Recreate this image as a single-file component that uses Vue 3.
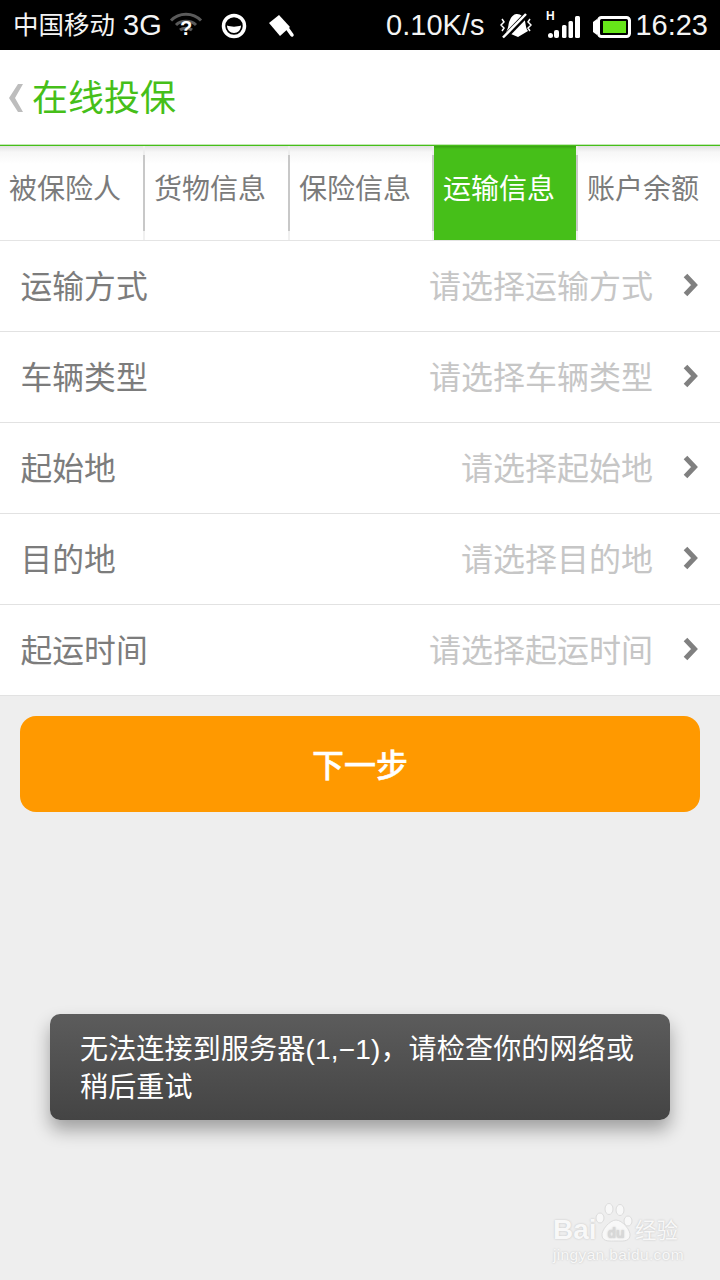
<script setup>
const tabs = [
  { label: '被保险人' },
  { label: '货物信息' },
  { label: '保险信息' },
  { label: '运输信息', active: true },
  { label: '账户余额' },
]
const rows = [
  { label: '运输方式', hint: '请选择运输方式' },
  { label: '车辆类型', hint: '请选择车辆类型' },
  { label: '起始地', hint: '请选择起始地' },
  { label: '目的地', hint: '请选择目的地' },
  { label: '起运时间', hint: '请选择起运时间' },
]
</script>

<template>
  <div class="page">
    <div class="status">
      <div class="status-left">
        <span class="carrier">中国移动</span>
        <span class="net">3G</span>
        <svg class="wifi" width="34" height="50" viewBox="0 0 34 50">
          <path d="M2 20.500C10 12 24 12 32 20.500" fill="none" stroke="#5a5a5a" stroke-width="3"/>
          <path d="M7 25C12 20 22 20 27 25" fill="none" stroke="#5a5a5a" stroke-width="3"/>
          <path d="M11 30C14 27.500 20 27.500 23 30" fill="none" stroke="#5a5a5a" stroke-width="3"/>
          <text x="17" y="35" text-anchor="middle" class="wifi-q">?</text>
        </svg>
        <svg class="moon" width="26" height="50" viewBox="0 0 26 50">
          <circle cx="13" cy="26" r="10.500" fill="none" stroke="#fff" stroke-width="3.500"/>
          <path d="M6 25.500C10 27 16 27 20 25.500C20 30 17 33 13 33S6 30 6 25.500Z" fill="#fff"/>
        </svg>
        <svg class="brush" width="28" height="50" viewBox="0 0 28 50">
          <path d="M2 23L12 15L23 27L13 36Z" fill="#fff"/>
          <path d="M20 28L25 35" stroke="#fff" stroke-width="3.500" stroke-linecap="round"/>
        </svg>
      </div>
      <div class="status-right">
        <span class="speed">0.10K/s</span>
        <svg class="mute" width="32" height="50" viewBox="0 0 32 50">
          <path d="M6 32C9 28 8 23 10 20C12 15 15 14 17 14C21 14 24 17 25 21C26 26 26 29 28 31L18 37Z" fill="#fff"/>
          <path d="M4 38L27 14" stroke="#000" stroke-width="5.500"/>
          <path d="M3 37.500L26 14" stroke="#fff" stroke-width="2.500"/>
          <path d="M2 19L4 22L1 25L4 28L2 31M30 19L28 22L31 25L28 28L30 31" fill="none" stroke="#fff" stroke-width="1.500"/>
        </svg>
        <svg class="signal" width="35" height="50" viewBox="0 0 35 50">
          <text x="0" y="20" class="signal-h">H</text>
          <circle cx="4.500" cy="35.500" r="2.500" fill="#fff"/>
          <rect x="8" y="30" width="5" height="8" rx="2" fill="#fff"/>
          <rect x="16" y="25" width="4.500" height="13" rx="1.500" fill="#fff"/>
          <rect x="22.500" y="21" width="4.500" height="17" rx="1.500" fill="#fff"/>
          <rect x="29" y="16" width="5" height="22" rx="1.500" fill="#fff"/>
        </svg>
        <svg class="battery" width="38" height="50" viewBox="0 0 38 50">
          <path d="M0 22L4 19V35L0 32Z" fill="#fff"/>
          <rect x="5.500" y="17.500" width="31" height="19" rx="3" fill="none" stroke="#fff" stroke-width="3"/>
          <rect x="10" y="21" width="23" height="12" fill="#66e619"/>
        </svg>
        <span class="clock">16:23</span>
      </div>
    </div>

    <header class="title-bar">
      <svg class="back" width="16" height="30" viewBox="0 0 16 30">
        <path d="M15 1H10L1 15L10 29H15L7 15Z" fill="#bdbdbd"/>
      </svg>
      <h1 class="title">在线投保</h1>
    </header>

    <nav class="tabs">
      <div v-for="tab in tabs" :key="tab.label" class="tab" :class="{ active: tab.active }">{{ tab.label }}</div>
    </nav>

    <section class="list">
      <div v-for="row in rows" :key="row.label" class="row">
        <span class="row-label">{{ row.label }}</span>
        <span class="row-hint">{{ row.hint }}</span>
        <svg class="chevron" width="17" height="24" viewBox="0 0 17 24">
          <path d="M3.500 2.500L12.500 12L3.500 21.500" fill="none" stroke="#808080" stroke-width="5"/>
        </svg>
      </div>
    </section>

    <div class="action">
      <button class="next"><span class="next-label">下一步</span></button>
    </div>

    <div class="toast">
      <div class="toast-line">无法连接到服务器(1,−1)，请检查你的网络或</div>
      <div class="toast-line">稍后重试</div>
    </div>

    <div class="watermark">
      <div class="wm-top">
        <span class="wm-bai">Bai</span>
        <svg class="paw" width="38" height="40" viewBox="0 0 38 40">
          <g fill="#f8f8f8" stroke="#dcdcdc" stroke-width="1">
            <ellipse cx="5" cy="15" rx="4" ry="5"/>
            <ellipse cx="14" cy="6" rx="4" ry="5.500"/>
            <ellipse cx="25" cy="7" rx="4" ry="5.500"/>
            <ellipse cx="33" cy="18" rx="4" ry="5"/>
            <path d="M21 17C27 17 36 27 35 33C34 39 27 38 21 38C15 38 8 39 7 33C6 27 15 17 21 17Z"/>
          </g>
          <text x="21" y="35" text-anchor="middle" class="wm-du">du</text>
        </svg>
        <span class="wm-cn">经验</span>
      </div>
      <div class="wm-url">jingyan.baidu.com</div>
    </div>
  </div>
</template>

<style scoped>
.page {
  position: relative;
  width: 720px;
  height: 1280px;
  overflow: hidden;
  background: #eeeeee;
  font-family: "Noto Sans CJK SC", "Noto Sans", sans-serif;
}
.status {
  height: 50px;
  background: #000;
  color: #f4f4f4;
  display: flex;
  align-items: center;
  justify-content: space-between;
  padding: 0 12px 0 13px;
  font-family: "Liberation Sans", "Noto Sans CJK SC", sans-serif;
}
.status-left, .status-right { display: flex; align-items: center; height: 50px; }
.carrier { font-size: 25.500px; line-height: 50px; white-space: nowrap; }
.net { font-size: 29px; line-height: 52px; margin-left: 8px; }
.wifi { margin-left: 7px; flex: none; }
.wifi-q { font: bold 20px "Liberation Sans", sans-serif; fill: #fff; }
.moon { margin-left: 18px; flex: none; }
.brush { margin-left: 20px; flex: none; }
.speed { font-size: 29px; line-height: 52px; }
.mute { margin-left: 16px; flex: none; }
.signal { margin-left: 14px; flex: none; }
.signal-h { font: bold 12px "Liberation Sans", sans-serif; fill: #fff; }
.battery { margin-left: 12px; flex: none; }
.clock { font-size: 29px; line-height: 52px; margin-left: 4px; }

.title-bar {
  height: 95px;
  background: #fff;
  display: flex;
  align-items: center;
  padding-left: 8px;
  border-bottom: 1px solid #46bf19;
  box-shadow: inset 0 -1px 0 #c4e8b6;
}
.back { flex: none; margin-right: 8px; }
.title {
  margin: 0;
  padding-bottom: 5px;
  font-size: 36px;
  font-weight: 400;
  line-height: 44px;
  color: #46bf19;
}

.tabs {
  display: grid;
  grid-template-columns: 145px 145px 144px 144px 142px;
  height: 94px;
  background: linear-gradient(#e2e2e2 0, #f7f7f7 6px, #fff 18px);
  border-bottom: 1px solid #e4e4e4;
}
.tab {
  height: 94px;
  padding-left: 9px;
  font-size: 28px;
  line-height: 82px;
  color: #7b7b7b;
  white-space: nowrap;
  border-right: 2px solid #f0f0f0;
  border-image: linear-gradient(#eee 0 10px, #c8c8c8 10px 84px, #f0f0f0 84px) 1;
  box-sizing: border-box;
}
.tab.active {
  background: linear-gradient(#3aa013 0, #46bf19 3px);
  color: #fff;
}
.tab:last-child { border-right: 0; }

.list { background: #fff; }
.row {
  height: 90px;
  display: flex;
  align-items: center;
  padding: 0 21px 0 20.500px;
  border-bottom: 1px solid #e2e2e2;
}
.row-label { flex: 1; font-size: 31.800px; color: #7c7c7c; line-height: 40px; padding-bottom: 4px; }
.row-hint { font-size: 32px; color: #c6c6c6; line-height: 40px; padding-bottom: 4px; }
.chevron { margin: 0 0 2px 29px; flex: none; }

.action { padding: 20px 20px 0; }
.next {
  display: block;
  width: 680px;
  height: 96px;
  padding: 0 0 3px;
  border: 0;
  border-radius: 16px;
  background: #ff9900;
  color: #fff;
  font-family: inherit;
  font-size: 32px;
  font-weight: 500;
  -webkit-text-stroke: .4px #fff;
}
.next-label { display: block; line-height: 44px; }

.toast {
  position: absolute;
  left: 50px;
  top: 1014px;
  width: 620px;
  height: 106px;
  box-sizing: border-box;
  padding: 17px 30px 0;
  border-radius: 10px;
  background: linear-gradient(#5c5c5c, #444);
  box-shadow: 0 10px 18px rgba(0, 0, 0, .33);
  color: #fff;
  font-family: "Liberation Sans", "Noto Sans CJK SC", sans-serif;
  font-size: 28px;
  line-height: 38px;
}
.toast-line { height: 38px; white-space: nowrap; letter-spacing: .18px; }

.watermark {
  position: absolute;
  left: 553px;
  top: 1203px;
  width: 140px;
  color: #f8f8f8;
  text-shadow: 0 0 2px #bdbdbd;
}
.wm-top { display: flex; align-items: flex-end; height: 40px; }
.wm-bai { width: 42px; font: bold 28px/26px "Liberation Sans", sans-serif; white-space: nowrap; }
.paw { flex: none; }
.wm-du { font: bold 14px "Liberation Sans", sans-serif; fill: #d8d8d8; }
.wm-cn { font-size: 21.500px; line-height: 28px; white-space: nowrap; margin-left: 2px; }
.wm-url { font: 15.500px/20px "Liberation Sans", sans-serif; letter-spacing: .35px; margin-top: 2px; white-space: nowrap; }
</style>
<style>
html, body { margin: 0; background: #eeeeee; }
</style>
